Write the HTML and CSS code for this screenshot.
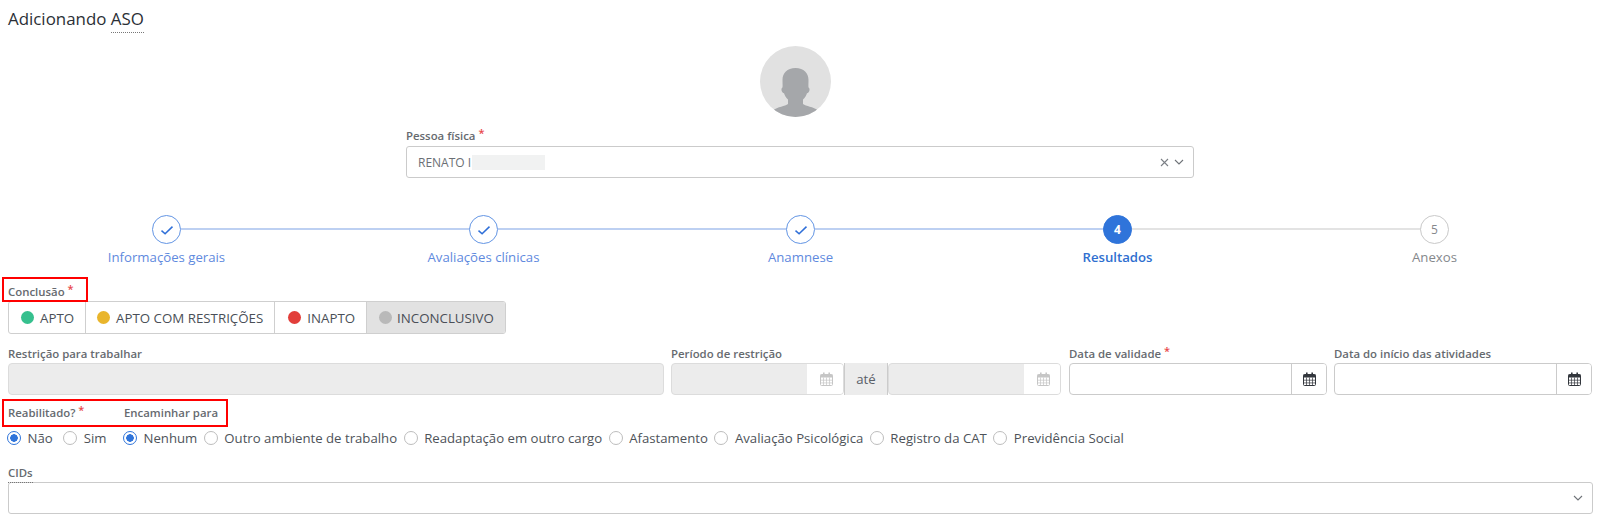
FILE: index.html
```html
<!DOCTYPE html>
<html lang="pt-BR">
<head>
<meta charset="utf-8">
<title>Adicionando ASO</title>
<link rel="stylesheet" href="styles.css">
</head>
<body>
<svg class="defs" width="0" height="0" aria-hidden="true">
  <defs>
    <symbol id="cal" viewBox="0 0 13 14">
      <path d="M1.5 2.5h10a1 1 0 0 1 1 1v9a1 1 0 0 1-1 1h-10a1 1 0 0 1-1-1v-9a1 1 0 0 1 1-1z" fill="none" stroke="currentColor"/>
      <path d="M0.5 2.5h12v3h-12z" fill="currentColor"/>
      <path d="M3 .5h1.600v3H3zM8.400 .5H10v3H8.400z" fill="currentColor"/>
      <path d="M3.500 5.500v8M6.500 5.500v8M9.500 5.500v8M.5 8.200h12M.5 10.900h12" fill="none" stroke="currentColor" stroke-width=".7"/>
    </symbol>
    <symbol id="chk" viewBox="0 0 14 14">
      <path d="M1.500 7.600l3.600 3.200L12.500 3.600" fill="none" stroke="currentColor" stroke-width="1.500"/>
    </symbol>
  </defs>
</svg>

<h1 class="title">Adicionando <span class="abbr">ASO</span></h1>

<section class="person">
  <div class="avatar">
    <svg viewBox="0 0 71 71" width="71" height="71" aria-hidden="true">
      <path class="avatar-shape" d="M35.500 22C27 22 22.500 27 22.500 34C22.500 37 22.700 39 22.500 41.500C21.500 42 21.200 43.500 21.700 45C22.100 46.200 23 47 24 47.200C24.800 49.700 26.200 52 28 53.500L28 58C25 60.500 18 60.500 12.500 64.500A35.500 35.500 0 0 0 58.500 64.500C53 60.500 46 60.500 43 58L43 53.500C44.800 52 46.200 49.700 47 47.200C48 47 48.900 46.200 49.300 45C49.800 43.500 49.500 42 48.500 41.500C48.300 39 48.500 37 48.500 34C48.500 27 44 22 35.500 22Z"/>
    </svg>
  </div>
  <div class="person-field">
    <label class="label">Pessoa física <span class="req">*</span></label>
    <div class="select">
      <span class="select-value">RENATO I<span class="redacted"></span></span>
      <span class="clear">
        <svg viewBox="0 0 9 9" width="9" height="9" aria-hidden="true"><path d="M1 1l7 7M8 1L1 8" fill="none" stroke="currentColor" stroke-width="1.100"/></svg>
      </span>
      <svg class="chev" viewBox="0 0 10 6" width="10" height="6" aria-hidden="true"><path d="M1 1l4 4 4-4" fill="none" stroke="currentColor" stroke-width="1.100"/></svg>
    </div>
  </div>
</section>

<ol class="steps">
  <li class="step done"><span class="dot"><svg width="14" height="14"><use href="#chk"/></svg></span><span class="step-name">Informações gerais</span></li>
  <li class="step done"><span class="dot"><svg width="14" height="14"><use href="#chk"/></svg></span><span class="step-name">Avaliações clínicas</span></li>
  <li class="step done"><span class="dot"><svg width="14" height="14"><use href="#chk"/></svg></span><span class="step-name">Anamnese</span></li>
  <li class="step current"><span class="dot">4</span><span class="step-name">Resultados</span></li>
  <li class="step todo"><span class="dot">5</span><span class="step-name">Anexos</span></li>
</ol>

<section class="conclusion">
  <label class="label boxed-label">Conclusão <span class="req">*</span></label>
  <div class="segments">
    <span class="segment"><i class="bullet green"></i>APTO</span>
    <span class="segment"><i class="bullet yellow"></i>APTO COM RESTRIÇÕES</span>
    <span class="segment"><i class="bullet red"></i>INAPTO</span>
    <span class="segment active"><i class="bullet grey"></i>INCONCLUSIVO</span>
  </div>
</section>

<section class="fields">
  <div class="field">
    <label class="label">Restrição para trabalhar</label>
    <div class="input disabled"></div>
  </div>
  <div class="field">
    <label class="label">Período de restrição</label>
    <div class="range">
      <div class="input date disabled"><span class="fill"></span><span class="cal-addon"><svg width="13" height="14"><use href="#cal"/></svg></span></div>
      <span class="ate">até</span>
      <div class="input date disabled"><span class="fill"></span><span class="cal-addon"><svg width="13" height="14"><use href="#cal"/></svg></span></div>
    </div>
  </div>
  <div class="field">
    <label class="label">Data de validade <span class="req">*</span></label>
    <div class="input date"><span class="fill"></span><span class="cal-addon"><svg width="13" height="14"><use href="#cal"/></svg></span></div>
  </div>
  <div class="field">
    <label class="label">Data do início das atividades</label>
    <div class="input date"><span class="fill"></span><span class="cal-addon"><svg width="13" height="14"><use href="#cal"/></svg></span></div>
  </div>
</section>

<section class="choices">
  <div class="choice-group">
    <label class="label">Reabilitado? <span class="req">*</span></label>
    <div class="radios wide">
      <span class="radio on">Não</span>
      <span class="radio">Sim</span>
    </div>
  </div>
  <div class="choice-group">
    <label class="label">Encaminhar para</label>
    <div class="radios">
      <span class="radio on">Nenhum</span>
      <span class="radio">Outro ambiente de trabalho</span>
      <span class="radio">Readaptação em outro cargo</span>
      <span class="radio">Afastamento</span>
      <span class="radio">Avaliação Psicológica</span>
      <span class="radio">Registro da CAT</span>
      <span class="radio">Previdência Social</span>
    </div>
  </div>
  <span class="highlight"></span>
</section>

<section class="cids">
  <label class="label"><span class="abbr">CIDs</span></label>
  <div class="select tall">
    <svg class="chev" viewBox="0 0 10 6" width="10" height="6" aria-hidden="true"><path d="M1 1l4 4 4-4" fill="none" stroke="currentColor" stroke-width="1.100"/></svg>
  </div>
</section>
</body>
</html>
```

FILE: styles.css
```css
*, *::before, *::after { box-sizing: border-box; }
html, body { margin: 0; background: #fff; }
body {
  height: 520px;
  overflow: hidden;
  padding: 8px 7px 0 8px;
  font-family: "Open Sans", "Noto Sans", sans-serif;
  color: #4a4f57;
  font-size: 13.2px;
}
.defs { position: absolute; }
.title {
  margin: 0;
  font-size: 16.9px;
  line-height: 21px;
  font-weight: 400;
  color: #2b2f36;
}
.abbr { border-bottom: 1px dotted #777; padding-bottom: 2px; }

.label {
  display: block;
  font-size: 11.4px;
  font-weight: 600;
  line-height: 15px;
  color: #666a6f;
  white-space: nowrap;
}
.req { color: #e8474a; position: relative; top: -3px; font-size: 11px; }

.person { display: flex; flex-direction: column; align-items: center; margin-top: 17px; }
.avatar {
  width: 71px; height: 71px; border-radius: 50%;
  margin-right: 10px;
  background: #e1e1e1; overflow: hidden;
}
.avatar svg { display: block; }
.avatar-shape { fill: #a5a7aa; }
.person-field { width: 788px; margin-top: 11px; margin-right: 1px; }
.person-field .label { margin-bottom: 3px; }

.select {
  display: flex; align-items: center;
  height: 32px;
  border: 1px solid #cbcbcb;
  border-radius: 3px;
  padding: 0 9px 0 11px;
  background: #fff;
  color: #6b6f75;
}
.select-value { display: flex; align-items: center; font-size: 12px; flex: 1; color: #6b6f75; }
.redacted { width: 73px; height: 15px; background: #f1f2f2; margin-left: 1px; }
.clear { color: #7b7f85; display: flex; margin-right: 5px; }
.chev { color: #6f7378; margin-left: auto; }
.clear + .chev { margin-left: 0; }

.steps {
  list-style: none;
  margin: 37px 0 0;
  padding: 0;
  display: grid;
  grid-template-columns: repeat(5, 317px);
}
.step {
  position: relative;
  display: flex; flex-direction: column; align-items: center;
}
.step:not(:last-child)::after {
  content: "";
  position: absolute;
  left: calc(50% + 14px);
  width: calc(100% - 28px);
  top: 13px;
  height: 2px;
  background: #e3e3e3;
}
.step.done::after { background: #bdd0f2; }
.dot {
  width: 29px; height: 29px; border-radius: 50%;
  display: flex; align-items: center; justify-content: center;
  font-size: 12px;
  border: 1px solid #6395e4;
  color: #2f6fd8;
  background: #fff;
}
.step-name { margin-top: 3px; line-height: 20px; color: #5f8ade; }
.current .dot { background: #2f74da; border-color: #2f74da; color: #fff; font-weight: 700; }
.current .step-name { color: #2f6fd0; font-weight: 600; }
.todo .dot { border-color: #c9c9c9; color: #85888c; }
.todo .step-name { color: #85888c; }

.conclusion { position: relative; margin-top: 7px; }
.boxed-label { padding-top: 10px; height: 27px; }
.boxed-label::before {
  content: "";
  position: absolute;
  left: -6px; top: 3px;
  width: 86px; height: 25px;
  border: 2px solid #f00;
}
.segments {
  display: inline-flex;
  height: 33px;
  border: 1px solid #cfcfcf;
  border-radius: 3px;
  overflow: hidden;
  font-size: 13.3px;
}
.segment {
  display: flex; align-items: center;
  padding: 0 11px 0 12px;
  border-right: 1px solid #cfcfcf;
  color: #4a4f57;
  white-space: nowrap;
}
.segment:nth-child(2) { padding-left: 11px; }
.segment:nth-child(3) { padding-left: 13px; }
.segment:last-child { border-right: 0; }
.segment.active { background: #e2e2e2; }
.bullet { width: 13px; height: 13px; border-radius: 50%; margin-right: 6px; }
.segment:last-child .bullet { margin-right: 5px; }
.green { background: #36c08e; }
.yellow { background: #e9b52c; }
.red { background: #e23e3a; }
.grey { background: #b9b9b9; }

.fields {
  display: grid;
  grid-template-columns: 655px 390px 257px 258px;
  column-gap: 8px;
  margin-top: 12px;
}
.field:first-child, .field:nth-child(3) { margin-right: -1px; }
.field .label { margin-bottom: 2px; height: 15px; }
.input {
  height: 32px;
  border: 1px solid #cbcbcb;
  border-radius: 4px;
  background: #fff;
}
.input.disabled { background: #ececec; border-color: #dcdcdc; }
.date { display: flex; overflow: hidden; }
.fill { flex: 1; }
.cal-addon {
  width: 35px;
  border-left: 1px solid #cbcbcb;
  display: flex; align-items: center; justify-content: center;
  color: #33373d;
  background: #fff;
}
.disabled .cal-addon { width: 36px; padding-left: 2px; border-left: 0; color: #c6c6c6; }
.range { display: flex; }
.range .date { flex: 1; }
.ate {
  width: 44px;
  display: flex; align-items: center; justify-content: center;
  background: #ececec;
  border-left: 1px solid #cbcbcb;
  border-right: 1px solid #cbcbcb;
  color: #5a6068;
}

.choices { position: relative; display: flex; gap: 17.500px; margin-top: 7px; }
.choices .label { height: 22px; line-height: 22px; margin-bottom: 4px; }
.radios { display: flex; gap: 6.500px; margin-left: -1px; }
.radios.wide { gap: 10.500px; }
.radio {
  display: flex; align-items: center;
  line-height: 20px;
  white-space: nowrap;
  color: #4e5359;
}
.radio::before {
  content: "";
  width: 14px; height: 14px;
  border: 1.500px solid #bdbdbd;
  border-radius: 50%;
  margin-right: 6.500px;
  background: #fff;
}
.radio.on::before {
  border: 1.500px solid #2f74da;
  background: radial-gradient(circle, #2f74da 0 3.500px, #fff 4px);
}
.highlight {
  position: absolute;
  left: -6px; top: -3px;
  width: 226px; height: 28px;
  border: 2px solid #f00;
}

.cids { margin-top: 17px; }
.cids .label { margin-bottom: 2px; }
.select.tall { height: 32px; }
```
